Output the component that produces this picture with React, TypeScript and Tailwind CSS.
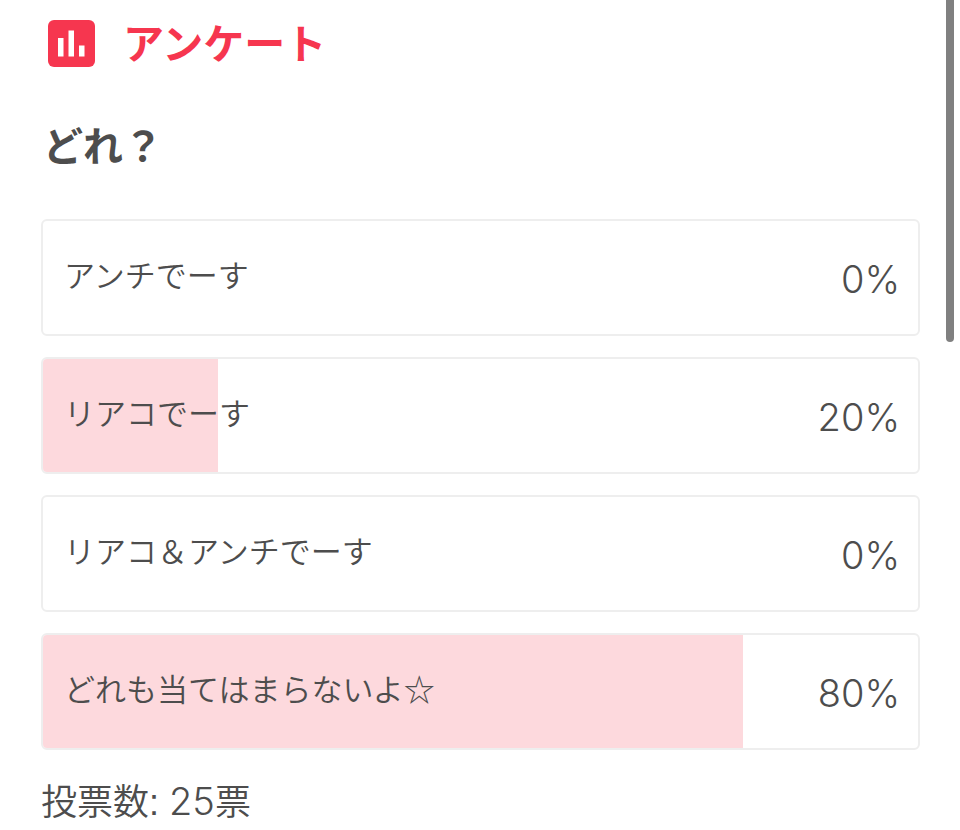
const options = [
  { label: "アンチでーす", percent: 0 },
  { label: "リアコでーす", percent: 20 },
  { label: "リアコ＆アンチでーす", percent: 0 },
  { label: "どれも当てはまらないよ☆", percent: 80 },
];

function PollIcon() {
  return (
    <svg className="size-[47px] shrink-0" viewBox="0 0 47 47" aria-hidden="true">
      <rect width="47" height="47" rx="6" fill="#f6364f" />
      <g fill="#fff">
        <rect x="10" y="18" width="5.5" height="18.5" />
        <rect x="20.5" y="10.5" width="5.5" height="26" />
        <rect x="31" y="25.5" width="5.5" height="11" />
      </g>
    </svg>
  );
}

export default function App() {
  return (
    <div className="relative min-h-screen overflow-hidden bg-white font-['Liberation_Sans','Noto_Sans_CJK_JP',sans-serif] text-[#4d4d4d]">
      <main lang="ja" className="pr-10 pl-[41px]">
        <header className="flex items-center gap-7 pt-5 pl-[7px] text-[#f6364f]">
          <PollIcon />
          <h1 className="pt-1 text-[41px] leading-[43px] font-bold">アンケート</h1>
        </header>

        <h2 className="mt-[50px] pl-0.5 text-[40px] leading-[60px] font-bold">どれ？</h2>

        <ul className="mt-[42px] flex flex-col gap-[21px]">
          {options.map((option) => (
            <li
              key={option.label}
              className="relative flex h-[117px] items-center justify-between overflow-hidden rounded-md border-2 border-[#eeeeee] pr-[18px] pl-[21px]"
            >
              <div
                className="absolute inset-y-0 left-0 bg-[#fdd9dd]"
                style={{ width: `${option.percent}%` }}
              />
              <span className="relative pb-0.5 text-[31px] leading-[44px] font-[350]">
                {option.label}
              </span>
              <span className="relative pt-0.5 font-['Inter',sans-serif] text-[38px] leading-[44px] font-light">
                {option.percent}%
              </span>
            </li>
          ))}
        </ul>

        <p className="mt-[27px] text-[36px] leading-[48px] font-[350]">
          投票数: <span className="font-['Inter',sans-serif] text-[38px] font-light">25</span>票
        </p>
      </main>

      <div className="absolute top-0 right-[6px] h-[342px] w-2 rounded-b-full bg-[#808080]" />
    </div>
  );
}
